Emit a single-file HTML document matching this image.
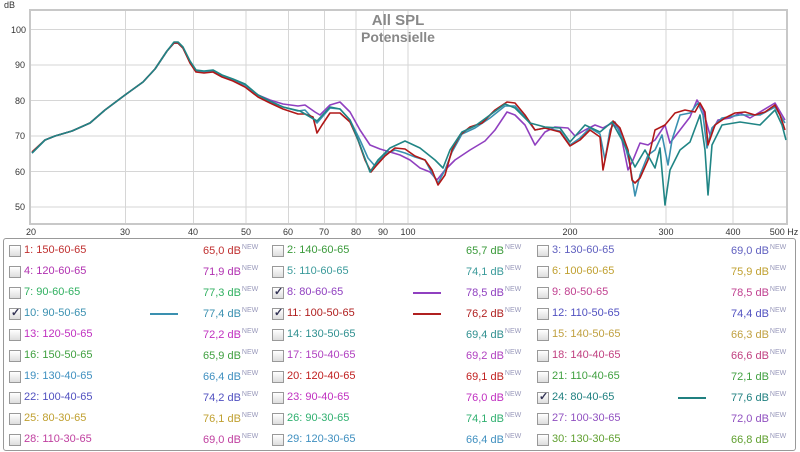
<!DOCTYPE html>
<html><head><meta charset="utf-8"><style>
body{margin:0;width:800px;height:452px;background:#fff;font-family:"Liberation Sans",sans-serif;overflow:hidden;position:relative}
.t{position:absolute;font-size:11px;white-space:nowrap}
.cb{position:absolute;width:10px;height:10px;border:1px solid #999;background:linear-gradient(#fff,#ddd)}
.cb.c::after{content:"✓";position:absolute;left:1px;top:-3px;font-size:11px;color:#335;font-weight:bold}
sup{font-size:7px;color:#99b;vertical-align:5px;margin-left:1px}
.ln{position:absolute;height:2px}
</style></head><body>
<svg width="800" height="240" style="position:absolute;left:0;top:0" font-family="Liberation Sans, sans-serif">
<rect x="30" y="10" width="757" height="214" fill="#fff" stroke="#ccc" stroke-width="2"/>
<g stroke="#d6d6d6" stroke-width="1">
<line x1="30" y1="29.5" x2="786" y2="29.5"/><line x1="30" y1="65" x2="786" y2="65"/><line x1="30" y1="100.5" x2="786" y2="100.5"/><line x1="30" y1="136" x2="786" y2="136"/><line x1="30" y1="171.5" x2="786" y2="171.5"/><line x1="30" y1="207" x2="786" y2="207"/>
<line x1="125.5" y1="10" x2="125.5" y2="224"/><line x1="193.5" y1="10" x2="193.5" y2="224"/><line x1="246" y1="10" x2="246" y2="224"/><line x1="288.5" y1="10" x2="288.5" y2="224"/><line x1="324.5" y1="10" x2="324.5" y2="224"/><line x1="356" y1="10" x2="356" y2="224"/><line x1="383.5" y1="10" x2="383.5" y2="224"/><line x1="408" y1="10" x2="408" y2="224"/><line x1="570.5" y1="10" x2="570.5" y2="224"/><line x1="666" y1="10" x2="666" y2="224"/><line x1="733" y1="10" x2="733" y2="224"/>
</g>
<rect x="30" y="10" width="757" height="214" fill="none" stroke="#c8c8c8" stroke-width="2"/>
<g font-size="9" fill="#333"><text x="4" y="8">dB</text>
<text x="11" y="33">100</text><text x="15" y="68">90</text><text x="15" y="104">80</text><text x="15" y="139">70</text><text x="15" y="175">60</text><text x="15" y="210">50</text>
<g text-anchor="middle"><text x="31" y="235">20</text><text x="125" y="235">30</text><text x="193" y="235">40</text><text x="246" y="235">50</text><text x="288" y="235">60</text><text x="324" y="235">70</text><text x="356" y="235">80</text><text x="383" y="235">90</text><text x="408" y="235">100</text><text x="570" y="235">200</text><text x="666" y="235">300</text><text x="733" y="235">400</text><text x="784" y="235">500 Hz</text></g></g>
<text x="398" y="25" font-size="15" font-weight="bold" fill="#888" text-anchor="middle">All SPL</text>
<text x="398" y="42" font-size="14" font-weight="bold" fill="#888" text-anchor="middle">Potensielle</text>
<g fill="none" stroke-width="1.6" stroke-linejoin="round">
<polyline stroke="#9040c0" points="32,153 45,140 55,136 72,131 90,123 105,110 125,95 143,82 155,69 167,51 174,43 178,43 183,48 190,62 196,71 204,72 213,71 222,76 233,80 245,85 258,95 270,100 283,104 298,106 305,105 315,112 320,115 330,105 340,102 350,112 360,130 370,145 380,149 390,152 400,155 410,160 420,168 430,172 437,180 445,170 455,160 470,150 485,141 495,130 507,112 515,115 525,125 535,145 545,132 555,127 568,128 575,136 585,130 595,125 603,128 612,123 620,130 628,170 633,160 640,143 648,145 655,140 665,125 670,143 680,130 690,117 697,100 703,110 710,135 718,120 730,118 740,113 750,118 760,112 775,103 785,120"/>
<polyline stroke="#3a90b0" points="32,153 45,140 55,136 72,131 90,123 105,110 125,95 143,82 155,69 167,51 174,43 178,43 183,48 190,62 196,71 204,72 213,71 222,76 233,80 245,85 258,95 270,102 283,107 298,111 305,110 317,123 330,108 340,109 350,120 360,140 368,158 375,166 385,154 395,150 405,153 415,157 425,160 433,175 438,183 445,170 452,152 462,134 475,128 490,118 505,106 515,106 525,117 535,130 545,128 560,131 570,145 580,138 590,128 600,134 605,160 610,130 615,122 625,145 630,165 635,196 640,175 648,155 655,150 662,135 668,165 672,140 680,115 690,113 698,103 703,115 707,148 712,128 722,118 740,115 760,115 775,107 785,123"/>
<polyline stroke="#b01818" points="32,152 45,140 55,136 72,131 90,123 105,110 125,95 143,82 155,69 167,51 174,43 178,43 183,48 190,63 196,72 204,73 213,72 222,77 233,81 245,87 258,97 270,103 283,109 298,114 305,114 313,117 317,133 322,125 330,113 340,113 350,122 358,140 365,160 371,172 376,166 385,156 395,148 405,149 415,156 425,160 432,170 438,185 445,175 452,150 460,135 470,127 482,123 495,110 507,102 515,103 525,115 535,130 545,128 560,132 570,146 580,140 590,130 600,137 603,170 608,145 613,121 620,128 628,150 632,180 635,183 640,178 648,160 655,130 665,125 675,113 685,110 695,112 700,103 705,112 708,145 715,125 725,118 735,113 745,112 755,115 765,112 775,105 780,115 785,130"/>
<polyline stroke="#208585" points="32,153 45,140 55,136 72,131 90,123 105,110 125,95 143,82 155,69 167,51 174,42 178,42 183,47 190,61 196,70 204,71 213,70 222,75 233,79 245,84 258,95 270,101 283,107 300,111 317,121 330,107 340,109 350,120 360,145 370,172 378,160 390,148 405,141 420,148 435,160 443,168 450,150 462,132 475,126 490,115 505,104 515,108 530,123 545,127 560,128 570,142 585,125 600,132 612,122 622,140 635,167 645,150 655,168 660,148 665,205 670,170 680,150 690,142 700,115 705,150 708,195 712,145 722,125 740,122 760,125 775,110 782,125 786,140"/>
</g></svg>
<div style="position:absolute;left:3px;top:238px;width:791px;height:211px;border:1px solid #999;border-radius:3px"></div>
<div id="L"></div>
<script>
var d=[["1: 150-60-65","65,0","#c03030"],["2: 140-60-65","65,7","#3a9a3a"],["3: 130-60-65","69,0","#6060c0"],
["4: 120-60-65","71,9","#b030b0"],["5: 110-60-65","74,1","#3a9a9a"],["6: 100-60-65","75,9","#c0a030"],
["7: 90-60-65","77,3","#30b060"],["8: 80-60-65","78,5","#9040c0"],["9: 80-50-65","78,5","#c04090"],
["10: 90-50-65","77,4","#3a90b0"],["11: 100-50-65","76,2","#b02020"],["12: 110-50-65","74,4","#5050c0"],
["13: 120-50-65","72,2","#c030c0"],["14: 130-50-65","69,4","#309090"],["15: 140-50-65","66,3","#c0a040"],
["16: 150-50-65","65,9","#40a040"],["17: 150-40-65","69,2","#b040c0"],["18: 140-40-65","66,6","#c04080"],
["19: 130-40-65","66,4","#4090c0"],["20: 120-40-65","69,1","#c02020"],["21: 110-40-65","72,1","#40a040"],
["22: 100-40-65","74,2","#5050c0"],["23: 90-40-65","76,0","#c030c0"],["24: 80-40-65","77,6","#208080"],
["25: 80-30-65","76,1","#c0a030"],["26: 90-30-65","74,1","#30b070"],["27: 100-30-65","72,0","#9050c0"],
["28: 110-30-65","69,0","#c040a0"],["29: 120-30-65","66,4","#4090c0"],["30: 130-30-65","66,8","#60a030"]];
var chk={7:1,9:1,10:1,23:1},h="",cx=[9,272,537];
d.forEach(function(e,i){var c=i%3,r=Math.floor(i/3),x=cx[c],y=245+r*21;
h+='<div class="cb'+(chk[i]?' c':'')+'" style="left:'+x+'px;top:'+y+'px"></div>';
h+='<div class="t" style="left:'+(x+15)+'px;top:'+(y-1)+'px;color:'+e[2]+'">'+e[0]+'</div>';
h+='<div class="t" style="left:'+(x+194)+'px;top:'+(y-1)+'px;color:'+e[2]+'">'+e[1]+' dB<sup>NEW</sup></div>';
if(chk[i])h+='<div class="ln" style="left:'+(x+141)+'px;top:'+(y+5)+'px;width:28px;background:'+e[2]+'"></div>';});
document.getElementById("L").innerHTML=h;
</script>
</body></html>
